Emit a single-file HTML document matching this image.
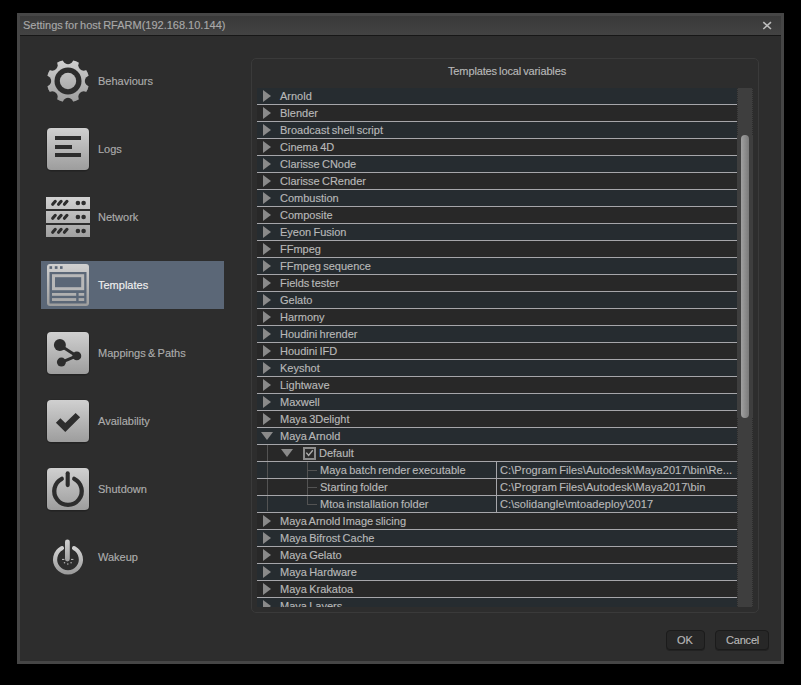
<!DOCTYPE html>
<html><head><meta charset="utf-8"><style>
html,body{margin:0;padding:0;background:#000;width:801px;height:685px;overflow:hidden}
body{position:relative;font-family:"Liberation Sans", sans-serif;font-size:11px;color:#b8b8b8}
.t{position:absolute;white-space:nowrap;line-height:16px;height:16px;top:0;-webkit-text-stroke:0.15px currentColor;word-spacing:-0.8px}
.row{position:absolute;left:0;width:480px;height:16px}
.sep{position:absolute;left:0;width:480px;height:1px;background:#a6a6aa}
</style></head><body>
<div style="position:absolute;left:17px;top:13px;width:767px;height:651px;background:#464646"></div>
<div style="position:absolute;left:20px;top:16px;width:761px;height:19px;background:linear-gradient(180deg,#393939,#434343)"></div>
<div style="position:absolute;left:20px;top:35px;width:761px;height:1px;background:#171717"></div>
<div style="position:absolute;left:20px;top:36px;width:761px;height:625px;background:#2d2d2d"></div>
<div class="t" style="left:23px;top:17px;color:#a8a8a8">Settings for host RFARM(192.168.10.144)</div>
<svg style="position:absolute;left:762px;top:21px" width="10" height="9"><path d="M1.3 1.2L9 8M9 1.2L1.3 8" stroke="#bdbdbd" stroke-width="1.6"/></svg>
<div style="position:absolute;left:41px;top:261px;width:183px;height:48px;background:#5b6777"></div><div class="t" style="left:98px;top:73px;color:#acacac">Behaviours</div><div class="t" style="left:98px;top:141px;color:#acacac">Logs</div><div class="t" style="left:98px;top:209px;color:#acacac">Network</div><div class="t" style="left:98px;top:277px;color:#f0f0f0">Templates</div><div class="t" style="left:98px;top:345px;color:#acacac">Mappings &amp; Paths</div><div class="t" style="left:98px;top:413px;color:#acacac">Availability</div><div class="t" style="left:98px;top:481px;color:#acacac">Shutdown</div><div class="t" style="left:98px;top:549px;color:#acacac">Wakeup</div>
<svg style="position:absolute;left:0;top:0" width="801" height="685">
<defs><linearGradient id="g0" x1="0" y1="0" x2="0" y2="1"><stop offset="0" stop-color="#d0d0d0"/><stop offset="1" stop-color="#9d9d9d"/></linearGradient><linearGradient id="g1" x1="0" y1="0" x2="0" y2="1"><stop offset="0" stop-color="#d0d0d0"/><stop offset="1" stop-color="#9d9d9d"/></linearGradient><linearGradient id="g2" x1="0" y1="0" x2="0" y2="1"><stop offset="0" stop-color="#d0d0d0"/><stop offset="1" stop-color="#9d9d9d"/></linearGradient><linearGradient id="g3" x1="0" y1="0" x2="0" y2="1"><stop offset="0" stop-color="#d0d0d0"/><stop offset="1" stop-color="#9d9d9d"/></linearGradient><linearGradient id="g4" x1="0" y1="0" x2="0" y2="1"><stop offset="0" stop-color="#d0d0d0"/><stop offset="1" stop-color="#9d9d9d"/></linearGradient><linearGradient id="g5" x1="0" y1="0" x2="0" y2="1"><stop offset="0" stop-color="#d0d0d0"/><stop offset="1" stop-color="#9d9d9d"/></linearGradient><linearGradient id="g6" x1="0" y1="0" x2="0" y2="1"><stop offset="0" stop-color="#d0d0d0"/><stop offset="1" stop-color="#9d9d9d"/></linearGradient><linearGradient id="g7" x1="0" y1="0" x2="0" y2="1"><stop offset="0" stop-color="#d0d0d0"/><stop offset="1" stop-color="#9d9d9d"/></linearGradient>
<mask id="mgear" maskUnits="userSpaceOnUse" x="0" y="0" width="801" height="685"><circle cx="68" cy="81" r="21.3" fill="white"/><circle cx="68.00" cy="58.80" r="5.4" fill="black"/><circle cx="83.70" cy="65.30" r="5.4" fill="black"/><circle cx="90.20" cy="81.00" r="5.4" fill="black"/><circle cx="83.70" cy="96.70" r="5.4" fill="black"/><circle cx="68.00" cy="103.20" r="5.4" fill="black"/><circle cx="52.30" cy="96.70" r="5.4" fill="black"/><circle cx="45.80" cy="81.00" r="5.4" fill="black"/><circle cx="52.30" cy="65.30" r="5.4" fill="black"/><circle cx="68" cy="81" r="13.5" fill="black"/><circle cx="68" cy="81" r="8.2" fill="white"/></mask>
</defs>
<rect x="46.7" y="59.7" width="42.6" height="42.6" fill="url(#g0)" mask="url(#mgear)"/>
<!-- logs -->
<rect x="46.2" y="127.8" width="43.6" height="43.6" rx="5" fill="#1c1c1c" opacity="0.55"/><rect x="47" y="128" width="42" height="42" rx="4" fill="url(#g1)"/>
<rect x="55" y="136" width="26" height="4" fill="#2d2d2d"/>
<rect x="55" y="145" width="17" height="4" fill="#2d2d2d"/>
<rect x="55" y="153" width="26" height="4" fill="#2d2d2d"/>

<linearGradient id="gnet" gradientUnits="userSpaceOnUse" x1="0" y1="197" x2="0" y2="237"><stop offset="0" stop-color="#d2d2d2"/><stop offset="1" stop-color="#a0a0a0"/></linearGradient><rect x="46" y="197" width="44" height="12" fill="url(#gnet)"/><rect x="46" y="211" width="44" height="12" fill="url(#gnet)"/><rect x="46" y="225" width="44" height="12" fill="url(#gnet)"/><line x1="52.70" y1="204.30" x2="55.30" y2="201.30" stroke="#2d2d2d" stroke-width="3.1" stroke-linecap="round"/><line x1="58.55" y1="204.30" x2="61.15" y2="201.30" stroke="#2d2d2d" stroke-width="3.1" stroke-linecap="round"/><line x1="64.40" y1="204.30" x2="67.00" y2="201.30" stroke="#2d2d2d" stroke-width="3.1" stroke-linecap="round"/><circle cx="77.9" cy="203" r="2.3" fill="#2d2d2d"/><circle cx="83.6" cy="203" r="2.3" fill="#2d2d2d"/><line x1="52.70" y1="218.30" x2="55.30" y2="215.30" stroke="#2d2d2d" stroke-width="3.1" stroke-linecap="round"/><line x1="58.55" y1="218.30" x2="61.15" y2="215.30" stroke="#2d2d2d" stroke-width="3.1" stroke-linecap="round"/><line x1="64.40" y1="218.30" x2="67.00" y2="215.30" stroke="#2d2d2d" stroke-width="3.1" stroke-linecap="round"/><circle cx="77.9" cy="217" r="2.3" fill="#2d2d2d"/><circle cx="83.6" cy="217" r="2.3" fill="#2d2d2d"/><line x1="52.70" y1="232.30" x2="55.30" y2="229.30" stroke="#2d2d2d" stroke-width="3.1" stroke-linecap="round"/><line x1="58.55" y1="232.30" x2="61.15" y2="229.30" stroke="#2d2d2d" stroke-width="3.1" stroke-linecap="round"/><line x1="64.40" y1="232.30" x2="67.00" y2="229.30" stroke="#2d2d2d" stroke-width="3.1" stroke-linecap="round"/><circle cx="77.9" cy="231" r="2.3" fill="#2d2d2d"/><circle cx="83.6" cy="231" r="2.3" fill="#2d2d2d"/>
<rect x="47" y="264" width="42" height="42" rx="3" fill="url(#g3)"/>
<rect x="49.5" y="272" width="37" height="31.5" fill="#5b6777"/>
<rect x="49.5" y="266.2" width="2.6" height="2.7" fill="#5b6777"/>
<rect x="54.8" y="266.2" width="2.7" height="2.7" fill="#5b6777"/>
<rect x="60" y="266.2" width="2.6" height="2.7" fill="#5b6777"/>
<rect x="53.5" y="275.7" width="29.2" height="13" fill="none" stroke="#b8b8b8" stroke-width="3"/>
<rect x="52" y="293" width="24.2" height="2.8" fill="#b0b0b0"/>
<rect x="78.6" y="293" width="5.6" height="2.8" fill="#b0b0b0"/>
<rect x="52" y="298.1" width="24.2" height="2.9" fill="#aaaaaa"/>
<rect x="78.6" y="298.1" width="5.6" height="2.9" fill="#aaaaaa"/>

<rect x="46.2" y="331.8" width="43.6" height="43.6" rx="5" fill="#1c1c1c" opacity="0.55"/><rect x="47" y="332" width="42" height="42" rx="4" fill="url(#g4)"/>
<line x1="59.6" y1="344.9" x2="76.6" y2="355.9" stroke="#2d2d2d" stroke-width="3"/>
<line x1="61.4" y1="362.3" x2="76.6" y2="355.9" stroke="#2d2d2d" stroke-width="3"/>
<circle cx="59.9" cy="345.1" r="6" fill="#2d2d2d"/>
<circle cx="76.8" cy="355.9" r="4.45" fill="#2d2d2d"/>
<circle cx="61.4" cy="362.1" r="4.5" fill="#2d2d2d"/>

<rect x="46.2" y="399.8" width="43.6" height="43.6" rx="5" fill="#1c1c1c" opacity="0.55"/><rect x="47" y="400" width="42" height="42" rx="4" fill="url(#g5)"/>
<path d="M55.9 422.7L60.4 418.2L65.3 423.1L75.6 412.9L80.1 417.3L65.3 432.1Z" fill="#2d2d2d"/>

<rect x="46.2" y="467.8" width="43.6" height="43.6" rx="5" fill="#1c1c1c" opacity="0.55"/><rect x="47" y="468" width="42" height="42" rx="4" fill="url(#g6)"/>
<path d="M61.76 478.85A13.75 13.75 0 1 0 74.24 478.85" stroke="#2d2d2d" stroke-width="4.3" fill="none" stroke-linecap="round"/>
<line x1="67.7" y1="473.2" x2="67.7" y2="485.1" stroke="#2d2d2d" stroke-width="4.1" stroke-linecap="round"/>

<path d="M61.94 548.11A12.9 12.9 0 1 0 74.06 548.11" stroke="url(#g7)" stroke-width="4.2" fill="none" stroke-linecap="round"/>
<rect x="65" y="539.4" width="4.8" height="22" rx="2.4" fill="url(#g7)"/>
<g fill="#b0b0b0"><rect x="62" y="558.9" width="2.4" height="1.1"/><rect x="71" y="558.9" width="2.4" height="1.1"/><circle cx="64.5" cy="562.7" r="0.8"/><circle cx="67.8" cy="564" r="0.8"/><circle cx="71.1" cy="562.7" r="0.8"/></g>
</svg>
<div style="position:absolute;left:251px;top:58px;width:506px;height:553px;border:1px solid #3a3a3a;border-radius:5px;background:#2d2d2d"></div>
<div class="t" style="left:448px;top:63px;letter-spacing:-0.13px">Templates local variables</div>
<div style="position:absolute;left:257px;top:88px;width:480px;height:519px;overflow:hidden">
<div class="row" style="top:0px;background:#262c30"><svg style="position:absolute;left:6px;top:2px" width="8" height="12"><path d="M0 0L8 6L0 12Z" fill="#8a8a8a"/></svg><div class="t" style="left:23px">Arnold</div></div><div class="row" style="top:17px;background:#282828"><svg style="position:absolute;left:6px;top:2px" width="8" height="12"><path d="M0 0L8 6L0 12Z" fill="#8a8a8a"/></svg><div class="t" style="left:23px">Blender</div></div><div class="row" style="top:34px;background:#262c30"><svg style="position:absolute;left:6px;top:2px" width="8" height="12"><path d="M0 0L8 6L0 12Z" fill="#8a8a8a"/></svg><div class="t" style="left:23px">Broadcast shell script</div></div><div class="row" style="top:51px;background:#282828"><svg style="position:absolute;left:6px;top:2px" width="8" height="12"><path d="M0 0L8 6L0 12Z" fill="#8a8a8a"/></svg><div class="t" style="left:23px">Cinema 4D</div></div><div class="row" style="top:68px;background:#262c30"><svg style="position:absolute;left:6px;top:2px" width="8" height="12"><path d="M0 0L8 6L0 12Z" fill="#8a8a8a"/></svg><div class="t" style="left:23px">Clarisse CNode</div></div><div class="row" style="top:85px;background:#282828"><svg style="position:absolute;left:6px;top:2px" width="8" height="12"><path d="M0 0L8 6L0 12Z" fill="#8a8a8a"/></svg><div class="t" style="left:23px">Clarisse CRender</div></div><div class="row" style="top:102px;background:#262c30"><svg style="position:absolute;left:6px;top:2px" width="8" height="12"><path d="M0 0L8 6L0 12Z" fill="#8a8a8a"/></svg><div class="t" style="left:23px">Combustion</div></div><div class="row" style="top:119px;background:#282828"><svg style="position:absolute;left:6px;top:2px" width="8" height="12"><path d="M0 0L8 6L0 12Z" fill="#8a8a8a"/></svg><div class="t" style="left:23px">Composite</div></div><div class="row" style="top:136px;background:#262c30"><svg style="position:absolute;left:6px;top:2px" width="8" height="12"><path d="M0 0L8 6L0 12Z" fill="#8a8a8a"/></svg><div class="t" style="left:23px">Eyeon Fusion</div></div><div class="row" style="top:153px;background:#282828"><svg style="position:absolute;left:6px;top:2px" width="8" height="12"><path d="M0 0L8 6L0 12Z" fill="#8a8a8a"/></svg><div class="t" style="left:23px">FFmpeg</div></div><div class="row" style="top:170px;background:#262c30"><svg style="position:absolute;left:6px;top:2px" width="8" height="12"><path d="M0 0L8 6L0 12Z" fill="#8a8a8a"/></svg><div class="t" style="left:23px">FFmpeg sequence</div></div><div class="row" style="top:187px;background:#282828"><svg style="position:absolute;left:6px;top:2px" width="8" height="12"><path d="M0 0L8 6L0 12Z" fill="#8a8a8a"/></svg><div class="t" style="left:23px">Fields tester</div></div><div class="row" style="top:204px;background:#262c30"><svg style="position:absolute;left:6px;top:2px" width="8" height="12"><path d="M0 0L8 6L0 12Z" fill="#8a8a8a"/></svg><div class="t" style="left:23px">Gelato</div></div><div class="row" style="top:221px;background:#282828"><svg style="position:absolute;left:6px;top:2px" width="8" height="12"><path d="M0 0L8 6L0 12Z" fill="#8a8a8a"/></svg><div class="t" style="left:23px">Harmony</div></div><div class="row" style="top:238px;background:#262c30"><svg style="position:absolute;left:6px;top:2px" width="8" height="12"><path d="M0 0L8 6L0 12Z" fill="#8a8a8a"/></svg><div class="t" style="left:23px">Houdini hrender</div></div><div class="row" style="top:255px;background:#282828"><svg style="position:absolute;left:6px;top:2px" width="8" height="12"><path d="M0 0L8 6L0 12Z" fill="#8a8a8a"/></svg><div class="t" style="left:23px">Houdini IFD</div></div><div class="row" style="top:272px;background:#262c30"><svg style="position:absolute;left:6px;top:2px" width="8" height="12"><path d="M0 0L8 6L0 12Z" fill="#8a8a8a"/></svg><div class="t" style="left:23px">Keyshot</div></div><div class="row" style="top:289px;background:#282828"><svg style="position:absolute;left:6px;top:2px" width="8" height="12"><path d="M0 0L8 6L0 12Z" fill="#8a8a8a"/></svg><div class="t" style="left:23px">Lightwave</div></div><div class="row" style="top:306px;background:#262c30"><svg style="position:absolute;left:6px;top:2px" width="8" height="12"><path d="M0 0L8 6L0 12Z" fill="#8a8a8a"/></svg><div class="t" style="left:23px">Maxwell</div></div><div class="row" style="top:323px;background:#282828"><svg style="position:absolute;left:6px;top:2px" width="8" height="12"><path d="M0 0L8 6L0 12Z" fill="#8a8a8a"/></svg><div class="t" style="left:23px">Maya 3Delight</div></div><div class="row" style="top:340px;background:#262c30"><svg style="position:absolute;left:4px;top:4px" width="12" height="8"><path d="M0 0L12 0L6 8Z" fill="#8a8a8a"/></svg><div class="t" style="left:23px">Maya Arnold</div></div><div class="row" style="top:357px;background:#282828"><svg style="position:absolute;left:24px;top:4px" width="12" height="8"><path d="M0 0L12 0L6 8Z" fill="#8a8a8a"/></svg><div style="position:absolute;left:46px;top:2px;width:9px;height:9px;border:2px solid #8c8c8c;background:#2a2a2a"></div><svg style="position:absolute;left:46px;top:2px" width="13" height="13"><path d="M3.3 5.6L5.6 8.5L9.8 3.3" stroke="#ababab" stroke-width="1.4" fill="none"/></svg><div class="t" style="left:62px">Default</div></div><div class="row" style="top:374px;background:#262c30"><div class="t" style="left:63px">Maya batch render executable</div><div style="position:absolute;left:239px;top:0;width:1px;height:16px;background:#a6a6aa"></div><div class="t" style="left:243px;letter-spacing:0.07px">C:\Program Files\Autodesk\Maya2017\bin\Re...</div></div><div class="row" style="top:391px;background:#282828"><div class="t" style="left:63px">Starting folder</div><div style="position:absolute;left:239px;top:0;width:1px;height:16px;background:#a6a6aa"></div><div class="t" style="left:243px;letter-spacing:0.07px">C:\Program Files\Autodesk\Maya2017\bin</div></div><div class="row" style="top:408px;background:#262c30"><div class="t" style="left:63px">Mtoa installation folder</div><div style="position:absolute;left:239px;top:0;width:1px;height:16px;background:#a6a6aa"></div><div class="t" style="left:243px;letter-spacing:0.07px">C:\solidangle\mtoadeploy\2017</div></div><div class="row" style="top:425px;background:#282828"><svg style="position:absolute;left:6px;top:2px" width="8" height="12"><path d="M0 0L8 6L0 12Z" fill="#8a8a8a"/></svg><div class="t" style="left:23px">Maya Arnold Image slicing</div></div><div class="row" style="top:442px;background:#262c30"><svg style="position:absolute;left:6px;top:2px" width="8" height="12"><path d="M0 0L8 6L0 12Z" fill="#8a8a8a"/></svg><div class="t" style="left:23px">Maya Bifrost Cache</div></div><div class="row" style="top:459px;background:#282828"><svg style="position:absolute;left:6px;top:2px" width="8" height="12"><path d="M0 0L8 6L0 12Z" fill="#8a8a8a"/></svg><div class="t" style="left:23px">Maya Gelato</div></div><div class="row" style="top:476px;background:#262c30"><svg style="position:absolute;left:6px;top:2px" width="8" height="12"><path d="M0 0L8 6L0 12Z" fill="#8a8a8a"/></svg><div class="t" style="left:23px">Maya Hardware</div></div><div class="row" style="top:493px;background:#282828"><svg style="position:absolute;left:6px;top:2px" width="8" height="12"><path d="M0 0L8 6L0 12Z" fill="#8a8a8a"/></svg><div class="t" style="left:23px">Maya Krakatoa</div></div><div class="row" style="top:510px;background:#262c30"><svg style="position:absolute;left:6px;top:2px" width="8" height="12"><path d="M0 0L8 6L0 12Z" fill="#8a8a8a"/></svg><div class="t" style="left:23px">Maya Layers</div></div>
<div style="position:absolute;left:10px;top:357px;width:1px;height:66px;background:#535353"></div><div style="position:absolute;left:50px;top:374px;width:1px;height:43px;background:#535353"></div><div style="position:absolute;left:50px;top:382px;width:10px;height:1px;background:#535353"></div><div style="position:absolute;left:50px;top:399px;width:10px;height:1px;background:#535353"></div><div style="position:absolute;left:50px;top:416px;width:10px;height:1px;background:#535353"></div>
<div class="sep" style="top:16px"></div><div class="sep" style="top:33px"></div><div class="sep" style="top:50px"></div><div class="sep" style="top:67px"></div><div class="sep" style="top:84px"></div><div class="sep" style="top:101px"></div><div class="sep" style="top:118px"></div><div class="sep" style="top:135px"></div><div class="sep" style="top:152px"></div><div class="sep" style="top:169px"></div><div class="sep" style="top:186px"></div><div class="sep" style="top:203px"></div><div class="sep" style="top:220px"></div><div class="sep" style="top:237px"></div><div class="sep" style="top:254px"></div><div class="sep" style="top:271px"></div><div class="sep" style="top:288px"></div><div class="sep" style="top:305px"></div><div class="sep" style="top:322px"></div><div class="sep" style="top:339px"></div><div class="sep" style="top:356px"></div><div class="sep" style="top:373px"></div><div class="sep" style="top:390px"></div><div class="sep" style="top:407px"></div><div class="sep" style="top:424px"></div><div class="sep" style="top:441px"></div><div class="sep" style="top:458px"></div><div class="sep" style="top:475px"></div><div class="sep" style="top:492px"></div><div class="sep" style="top:509px"></div><div class="sep" style="top:526px"></div>
</div>
<div style="position:absolute;left:737px;top:88px;width:16px;height:519px;background:#3e3e3e"></div>
<div style="position:absolute;left:737px;top:88px;width:1px;height:47px;background:repeating-linear-gradient(180deg,#2c2c2c 0 1px,#3e3e3e 1px 2px)"></div>
<div style="position:absolute;left:752px;top:88px;width:1px;height:47px;background:repeating-linear-gradient(180deg,#2c2c2c 0 1px,#3e3e3e 1px 2px)"></div>
<div style="position:absolute;left:737px;top:418px;width:1px;height:189px;background:repeating-linear-gradient(180deg,#2c2c2c 0 1px,#3e3e3e 1px 2px)"></div>
<div style="position:absolute;left:752px;top:418px;width:1px;height:189px;background:repeating-linear-gradient(180deg,#2c2c2c 0 1px,#3e3e3e 1px 2px)"></div>

<div style="position:absolute;left:741px;top:135px;width:8px;height:283px;border-radius:4px;background:linear-gradient(90deg,#a0a0a0,#7a7a7a)"></div>
<div style="position:absolute;left:666px;top:630px;width:37px;height:18px;border:1px solid #1b1b1b;border-radius:4px;background:#272727;box-shadow:0 1px 0 #222"></div>
<div class="t" style="left:677px;top:632px">OK</div>
<div style="position:absolute;left:715px;top:630px;width:52px;height:18px;border:1px solid #1b1b1b;border-radius:4px;background:#272727;box-shadow:0 1px 0 #222"></div>
<div class="t" style="left:726px;top:632px;letter-spacing:-0.2px">Cancel</div>
</body></html>
